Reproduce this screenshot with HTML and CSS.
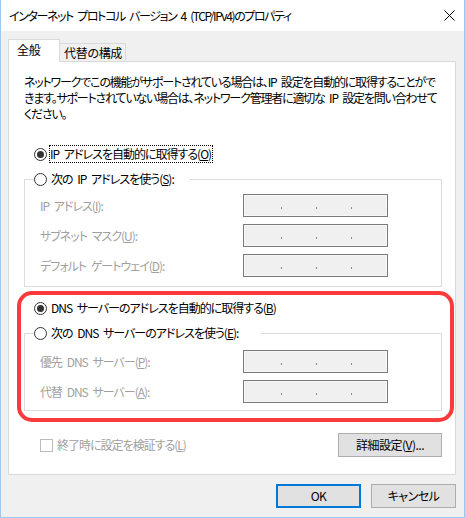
FILE: index.html
```html
<!DOCTYPE html>
<html lang="ja">
<head>
    <meta charset="UTF-8">
    <title>インターネット プロトコル バージョン 4 (TCP/IPv4)のプロパティ</title>
    <link rel="stylesheet" href="styles.css">
</head>
<body>
    <div class="window">
        <div class="titlebar">
            <span class="title">インターネット プロトコル バージョン 4 (TCP/IPv4)のプロパティ</span>
            <svg class="close" width="11" height="11" viewBox="0 0 11 11">
                <path d="M0.5 0.5 L10.5 10.5 M10.5 0.5 L0.5 10.5" stroke="#000" stroke-width="1" fill="none"/>
            </svg>
        </div>

        <div class="client">
            <div class="tabs">
                <div class="tab active">全般</div>
                <div class="tab">代替の構成</div>
            </div>

            <div class="panel">
                <p class="intro">ネットワークでこの機能がサポートされている場合は、IP 設定を自動的に取得することがで<br>きます。サポートされていない場合は、ネットワーク管理者に適切な IP 設定を問い合わせて<br>ください。</p>

                <div class="option top-option">
                    <span class="radio checked"></span>
                    <span class="focus">IP アドレスを自動的に取得する(<u>O</u>)</span>
                </div>

                <fieldset class="group">
                    <legend class="option legend-ip">
                        <span class="radio"></span>
                        <span>次の IP アドレスを使う(<u>S</u>):</span>
                    </legend>
                    <div class="rows">
                        <div class="field">
                            <span class="label">IP アドレス(<u>I</u>):</span>
                            <span class="ipbox"><i></i><i></i><i></i></span>
                        </div>
                        <div class="field">
                            <span class="label">サブネット マスク(<u>U</u>):</span>
                            <span class="ipbox"><i></i><i></i><i></i></span>
                        </div>
                        <div class="field">
                            <span class="label">デフォルト ゲートウェイ(<u>D</u>):</span>
                            <span class="ipbox"><i></i><i></i><i></i></span>
                        </div>
                    </div>
                </fieldset>

                <div class="option dns-option">
                    <span class="radio checked"></span>
                    <span>DNS サーバーのアドレスを自動的に取得する(<u>B</u>)</span>
                </div>

                <fieldset class="group">
                    <legend class="option legend-dns">
                        <span class="radio"></span>
                        <span>次の DNS サーバーのアドレスを使う(<u>E</u>):</span>
                    </legend>
                    <div class="rows rows-dns">
                        <div class="field">
                            <span class="label">優先 DNS サーバー(<u>P</u>):</span>
                            <span class="ipbox"><i></i><i></i><i></i></span>
                        </div>
                        <div class="field">
                            <span class="label">代替 DNS サーバー(<u>A</u>):</span>
                            <span class="ipbox"><i></i><i></i><i></i></span>
                        </div>
                    </div>
                </fieldset>

                <div class="bottom-row">
                    <div class="check">
                        <span class="checkbox"></span>
                        <span>終了時に設定を検証する(<u>L</u>)</span>
                    </div>
                    <button class="btn advanced">詳細設定(<u>V</u>)...</button>
                </div>

                <!-- 赤枠 (DNS 部分の強調) -->
                <div class="highlight"></div>
            </div>

            <div class="footer">
                <button class="btn default">OK</button>
                <button class="btn">キャンセル</button>
            </div>
        </div>
    </div>
</body>
</html>
```

FILE: styles.css
```css
body {
    margin: 0;
    font-family: "Noto Sans CJK JP", sans-serif;
    font-size: 12px;
    line-height: 16px;
    letter-spacing: -1px;
    word-spacing: 3px;
    color: #000;
    font-feature-settings: "palt";
}

.window {
    width: 465px;
    height: 518px;
    box-sizing: border-box;
    border: 1px solid #9ec6ee;
    border-top: none;
    background: #f0f0f0;
    display: flex;
    flex-direction: column;
}

.titlebar {
    height: 31px;
    background: #fff;
    display: flex;
    align-items: center;
    justify-content: space-between;
    padding: 0 9px 0 8px;
}

.title {
    white-space: nowrap;
    letter-spacing: -1.4px;
}

.close {
    display: block;
}

.client {
    flex: 1;
    padding: 8px 8px 0 7px;
}

/* タブ */
.tabs {
    display: flex;
    align-items: flex-end;
    margin-bottom: -1px;
    position: relative;
    z-index: 1;
    letter-spacing: -0.3px;
}

.tab {
    height: 19px;
    width: 66px;
    box-sizing: border-box;
    padding: 1px 0 0 4px;
    background: #f0f0f0;
    border: 1px solid #d9d9d9;
    border-left: none;
}

.tab.active {
    width: 52px;
    height: 23px;
    padding: 2px 0 0 8px;
    background: #fff;
    border-left: 1px solid #d9d9d9;
    border-bottom: none;
}

.panel {
    position: relative;
    background: #fff;
    border: 1px solid #d9d9d9;
    padding: 12px 13px 17px 15px;
}

.intro {
    margin: 0;
    white-space: nowrap;
    letter-spacing: -1.2px;
}

/* ラジオボタン */
.option {
    display: flex;
    align-items: center;
    height: 16px;
    white-space: nowrap;
}

.radio {
    width: 13px;
    height: 13px;
    box-sizing: border-box;
    border: 1px solid #333;
    border-radius: 50%;
    background: #fff;
    margin-right: 4px;
    position: relative;
    flex: none;
}

.radio.checked::after {
    content: "";
    position: absolute;
    left: 2px;
    top: 2px;
    width: 7px;
    height: 7px;
    border-radius: 50%;
    background: #333;
}

.top-option {
    margin: 24px 0 9px 10px;
}

.focus {
    outline: 1px dotted #000;
    padding: 0 1px 0 0;
    margin-left: -1px;
}

.dns-option {
    margin: 13px 0 9px 10px;
}

/* グループ ボックス */
.group {
    margin: 0;
    padding: 0;
    min-width: 0;
    border: 1px solid #dcdcdc;
}

.group legend {
    padding: 0;
    margin-left: 9px;
    box-sizing: border-box;
}

.legend-ip {
    width: 156px;
}

.legend-dns {
    width: 227px;
}

.rows {
    padding: 7px 0 9px 15px;
    display: flex;
    flex-direction: column;
    gap: 7px;
}

.rows-dns {
    padding: 9px 0 7px 15px;
}

.field {
    display: flex;
    align-items: center;
    height: 23px;
}

.label {
    width: 203px;
    color: #a0a0a0;
    white-space: nowrap;
}

.ipbox {
    width: 145px;
    height: 23px;
    box-sizing: border-box;
    border: 1px solid #7a7a7a;
    box-shadow: inset 0 0 0 1px #f7f7f7;
    background: #f0f0f0;
    display: flex;
    justify-content: center;
    align-items: flex-end;
    gap: 34px;
    padding: 0 0 7px 1px;
}

.ipbox i {
    width: 1px;
    height: 2px;
    background: #8a8a9a;
}

/* 下段 */
.bottom-row {
    margin-top: 22px;
    display: flex;
    align-items: center;
    justify-content: space-between;
}

.check {
    display: flex;
    align-items: center;
    padding-left: 16px;
    color: #a0a0a0;
    white-space: nowrap;
}

.checkbox {
    width: 13px;
    height: 13px;
    box-sizing: border-box;
    border: 1px solid #bcbcbc;
    background: #fff;
    margin-right: 4px;
}

.btn {
    font: inherit;
    font-feature-settings: "palt";
    letter-spacing: -0.5px;
    color: #000;
    height: 24px;
    width: 85px;
    padding: 0;
    background: #e1e1e1;
    border: 1px solid #adadad;
}

.btn.advanced {
    width: 104px;
}

.btn.default {
    border: 2px solid #0078d7;
}

.footer {
    display: flex;
    justify-content: flex-end;
    gap: 10px;
    padding: 9px 0 0;
}

.highlight {
    position: absolute;
    left: 8px;
    top: 229px;
    width: 437px;
    height: 131px;
    box-sizing: border-box;
    border: 4px solid #fb3b3b;
    border-radius: 15px;
    pointer-events: none;
}
```
